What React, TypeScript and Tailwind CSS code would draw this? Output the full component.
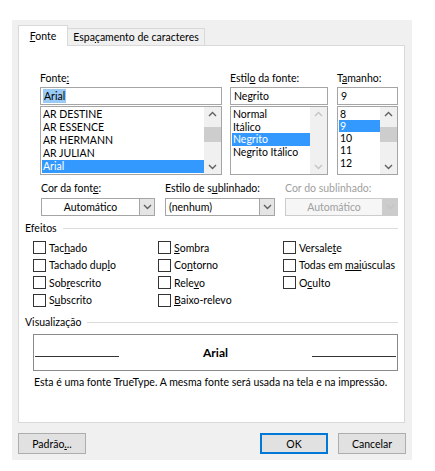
import React from "react"

const Up = ({ faded }: { faded?: boolean }) => (
  <svg width="9" height="6" viewBox="0 0 9 6">
    <path d="M1 5 L4.5 1.5 L8 5" fill="none" stroke={faded ? "#c4c4c4" : "#606060"} strokeWidth="1.4" />
  </svg>
)

const Down = ({ faded }: { faded?: boolean }) => (
  <svg width="9" height="6" viewBox="0 0 9 6">
    <path d="M1 1 L4.5 4.5 L8 1" fill="none" stroke={faded ? "#c4c4c4" : "#606060"} strokeWidth="1.4" />
  </svg>
)

interface ListProps {
  items: string[]
  selected: number
  rowH: string
  thumb?: boolean
  faded?: boolean
}

function ListBox({ items, selected, rowH, thumb, faded }: ListProps) {
  return (
    <div className="mt-px flex h-[69px] border border-[#a5a5a5] bg-white">
      <div className="flex-1 overflow-hidden pl-px pt-px">
        {items.map((it, i) => (
          <div
            key={it}
            className={`${rowH} flex items-center whitespace-nowrap pl-px leading-none ${
              i === selected ? "bg-[#3399ff] text-white" : "text-black"
            }`}
          >
            {it}
          </div>
        ))}
      </div>
      <div className="flex w-[17px] flex-col items-center bg-[#f0f0f0] py-[4px]">
        <Up faded={faded} />
        {thumb ? <div className="mt-[10px] h-[15px] w-[17px] bg-[#cdcdcd]" /> : null}
        <div className="flex-1" />
        <Down faded={faded} />
      </div>
    </div>
  )
}

function Select({ text, w, center, disabled }: { text: string; w: string; center?: boolean; disabled?: boolean }) {
  return (
    <div className={`${w} mt-[3px] flex h-[18px] border ${disabled ? "border-[#cccccc] bg-[#f6f6f6]" : "border-[#a5a5a5] bg-white"}`}>
      <div
        className={`flex flex-1 items-center px-[3px] ${center ? "justify-center" : ""} ${
          disabled ? "text-[#a0a0a0]" : "text-black"
        }`}
      >
        {text}
      </div>
      <div
        className={`flex w-[15px] items-center justify-center border-l ${
          disabled ? "border-[#cccccc] bg-[#cccccc]" : "border-[#a5a5a5] bg-[#e5e5e5]"
        }`}
      >
        <Down faded={disabled} />
      </div>
    </div>
  )
}

function Check({ children }: { children: React.ReactNode }) {
  return (
    <div className="flex h-[17.5px] items-center whitespace-nowrap">
      <div className="h-[13px] w-[13px] border border-[#333333] bg-white" />
      <span className="ml-[3px]">{children}</span>
    </div>
  )
}

const U = ({ children }: { children: React.ReactNode }) => <span className="underline">{children}</span>

function Legend({ text }: { text: string }) {
  return (
    <div className="flex h-[14px] items-center">
      <span>{text}</span>
      <div className="ml-[6px] mr-[6px] h-px flex-1 bg-[#dcdcdc]" />
    </div>
  )
}

function Btn({ children, focus }: { children: React.ReactNode; focus?: boolean }) {
  return (
    <div
      className={`flex h-[21px] w-[68px] items-center justify-center bg-[#e1e1e1] ${
        focus ? "border-2 border-[#0078d7]" : "border border-[#adadad]"
      }`}
    >
      {children}
    </div>
  )
}

export default function App() {
  return (
    <div
      className="h-[471px] w-[435px] bg-white pl-[12px] pt-[20px] text-[10.5px] leading-[14px] whitespace-nowrap text-black"
      style={{ fontFamily: 'Lato, "Noto Sans", sans-serif' }}
    >
      <div className="h-[440px] w-[400px] bg-[#f0f0f0] pl-[6px] pt-[5px]">
        {/* tabs */}
        <div className="flex h-[20px] items-end">
          <div className="relative z-10 -mb-px flex h-[21px] w-[50px] items-center justify-center border border-b-0 border-[#d9d9d9] bg-white">
            <span>
              <U>F</U>onte
            </span>
          </div>
          <div className="flex h-[17px] w-[137px] items-center justify-center border border-b-0 border-l-0 border-[#d9d9d9]">
            <span>
              Espa<U>ç</U>amento de caracteres
            </span>
          </div>
        </div>

        {/* panel */}
        <div className="h-[378px] w-[387px] border border-[#d9d9d9] bg-white pl-[6px] pt-[25px]">
          <div className="flex pl-[15px]">
            <div className="w-[182px]">
              <div className="h-[14px]">
                Fonte<U>:</U>
              </div>
              <div className="mt-[2px] flex h-[18px] items-center border border-[#a5a5a5] px-[2px]">
                <span className="bg-[#99c9f5] px-px">Arial</span>
              </div>
              <ListBox
                items={["AR DESTINE", "AR ESSENCE", "AR HERMANN", "AR JULIAN", "Arial"]}
                selected={4}
                rowH="h-[13px]"
                thumb
              />
            </div>
            <div className="ml-[8px] w-[98px]">
              <div className="h-[14px]">
                Estil<U>o</U> da fonte:
              </div>
              <div className="mt-[2px] flex h-[18px] items-center border border-[#a5a5a5] px-[3px]">Negrito</div>
              <ListBox
                items={["Normal", "Itálico", "Negrito", "Negrito Itálico"]}
                selected={2}
                rowH="h-[12.5px]"
                faded
              />
            </div>
            <div className="ml-[9px] w-[61px]">
              <div className="h-[14px]">
                T<U>a</U>manho:
              </div>
              <div className="mt-[2px] flex h-[18px] items-center border border-[#a5a5a5] px-[3px]">9</div>
              <ListBox items={["8", "9", "10", "11", "12"]} selected={1} rowH="h-[12.2px]" thumb />
            </div>
          </div>

          {/* dropdowns */}
          <div className="mt-[6px] flex pl-[16px]">
            <div>
              <div className="h-[14px]">
                Cor da font<U>e</U>:
              </div>
              <Select text="Automático" w="w-[114px]" center />
            </div>
            <div className="ml-[10px]">
              <div className="h-[14px]">
                Estilo de s<U>u</U>blinhado:
              </div>
              <Select text="(nenhum)" w="w-[110px]" />
            </div>
            <div className="ml-[10px]">
              <div className="h-[14px] text-[#a0a0a0]">Cor do sublinhado:</div>
              <Select text="Automático" w="w-[113px]" center disabled />
            </div>
          </div>

          {/* efeitos */}
          <div className="mt-[5px]">
            <Legend text="Efeitos" />
          </div>
          <div className="mt-[4px] grid grid-cols-[125px_125px_125px] pl-[8px]">
            <div>
              <Check>
                Tac<U>h</U>ado
              </Check>
              <Check>
                Tachado dup<U>l</U>o
              </Check>
              <Check>
                Sob<U>r</U>escrito
              </Check>
              <Check>
                S<U>u</U>bscrito
              </Check>
            </div>
            <div>
              <Check>
                <U>S</U>ombra
              </Check>
              <Check>
                Co<U>n</U>torno
              </Check>
              <Check>
                Rele<U>v</U>o
              </Check>
              <Check>
                <U>B</U>aixo-relevo
              </Check>
            </div>
            <div>
              <Check>
                Versale<U>t</U>e
              </Check>
              <Check>
                Todas em <U>mai</U>úsculas
              </Check>
              <Check>
                O<U>c</U>ulto
              </Check>
            </div>
          </div>

          {/* visualização */}
          <div className="mt-[6px]">
            <Legend text="Visualização" />
          </div>
          <div className="ml-[8px] mt-[5px] flex h-[37px] w-[365px] items-center border border-[#8a8a8a] px-px">
            <div className="mt-[8px] h-px w-[84px] bg-[#333333]" />
            <div className="flex-1 text-center text-[12px] font-bold">Arial</div>
            <div className="mt-[8px] h-px w-[84px] bg-[#333333]" />
          </div>
          <div className="ml-[9px] mt-[4px]">
            Esta é uma fonte TrueType. A mesma fonte será usada na tela e na impressão.
          </div>
        </div>

        {/* buttons */}
        <div className="mt-[10px] flex w-[388px]">
          <Btn>
            <span>
              Padrão<U>.</U>..
            </span>
          </Btn>
          <div className="flex-1" />
          <Btn focus>OK</Btn>
          <div className="w-[10px]" />
          <Btn>Cancelar</Btn>
        </div>
      </div>
    </div>
  )
}
